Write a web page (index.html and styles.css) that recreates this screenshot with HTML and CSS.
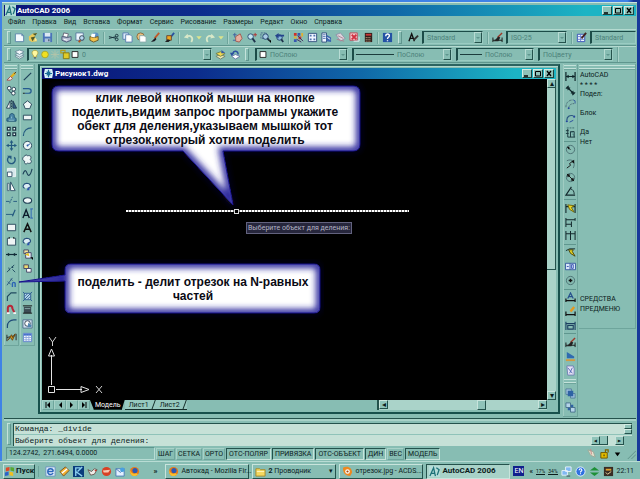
FILE: index.html
```html
<!DOCTYPE html>
<html lang="ru">
<head>
    <meta charset="UTF-8">
    <meta name="viewport" content="width=device-width, initial-scale=1.0">
    <title>AutoCAD 2006</title>
    <link rel="stylesheet" href="styles.css">
</head>
<body>
    <!-- Иконки -->
    <svg class="sprite" aria-hidden="true">
        <symbol id="new" viewBox="0 0 12 12"><path d="M1.500 2h7l2 2v6.500h-9z" fill="#f4faff" stroke="#5b86a8"/><path d="M8.500 2v2h2" fill="none" stroke="#5b86a8"/></symbol>
        <symbol id="open" viewBox="0 0 12 12"><path d="M1 5l4-3 5-1-3 4 3 5-6 1-3-2z" fill="#e8c95a"/><path d="M5 2l5-1-2 3zM3 6l5-1-3 5z" fill="#4d5a2c"/><path d="M8 6l2 3-3 1z" fill="#f6e9a0"/></symbol>
        <symbol id="save" viewBox="0 0 12 12"><path d="M1 1h10v10h-10z" fill="#4a74b8"/><path d="M3 1h6v4h-6z" fill="#dce8f4"/><path d="M3 7h6v4h-6z" fill="#a9bfd8"/><path d="M7 8h1v2h-1z" fill="#223344"/></symbol>
        <symbol id="print" viewBox="0 0 12 12"><path d="M3 1l5 1-1 4-5-1z" fill="#fff" stroke="#667"/><path d="M1 5l6 1 4-1v4l-5 2-5-2z" fill="#b6bfd2" stroke="#4a5878"/><path d="M3 8l4 1" stroke="#fff"/></symbol>
        <symbol id="preview" viewBox="0 0 12 12"><path d="M1 1h8v8h-8z" fill="#eef6ff" stroke="#58789c"/><circle cx="7.500" cy="6.500" r="2.500" fill="#b8d8f0" stroke="#345"/><path d="M6 9l-2 2" stroke="#a52" stroke-width="2"/></symbol>
        <symbol id="publish" viewBox="0 0 12 12"><circle cx="7" cy="4" r="3.500" fill="#5a90c4"/><path d="M1 5l5 1 4-1v4l-5 2-4-2z" fill="#f2c14a" stroke="#6b5a28"/><path d="M3 2l4 0-1 4-4-1z" fill="#fff"/></symbol>
        <symbol id="cut" viewBox="0 0 12 12"><path d="M1 5l8 2M1 7l8-2" stroke="#17323c" stroke-width="1"/><circle cx="9.500" cy="4" r="1.500" fill="none" stroke="#17323c"/><circle cx="9.500" cy="8" r="1.500" fill="none" stroke="#17323c"/></symbol>
        <symbol id="copy" viewBox="0 0 12 12"><path d="M1 1h6v7h-6z" fill="#d8e8f8" stroke="#5a7fb0"/><path d="M4 3h5l2 2v6h-7z" fill="#fff" stroke="#5a7fb0"/></symbol>
        <symbol id="paste" viewBox="0 0 12 12"><circle cx="5" cy="5" r="4" fill="#e8c080" stroke="#8a6a3c"/><path d="M4 4h5l2 2v5h-7z" fill="#fff" stroke="#8aa"/></symbol>
        <symbol id="brush" viewBox="0 0 12 12"><path d="M10 1l-5 6" stroke="#c05a2a" stroke-width="2"/><path d="M6 6l-5 5 4-1 2-2z" fill="#1c1c24"/></symbol>
        <symbol id="match" viewBox="0 0 12 12"><path d="M11 1l-4 5" stroke="#2850a0" stroke-width="2"/><path d="M3 4h5v5h-5z" fill="#f0a820" stroke="#643"/><path d="M4 8l-3 3h4l2-2z" fill="#222"/></symbol>
        <symbol id="undo" viewBox="0 0 12 12"><path d="M9 11c3-5-1-8-5-6" fill="none" stroke="#d8e8c8" stroke-width="2"/><path d="M1 6l4-4 1 5z" fill="#d8e8c8"/></symbol>
        <symbol id="redo" viewBox="0 0 12 12"><path d="M3 11c-3-5 1-8 5-6" fill="none" stroke="#d8e8c8" stroke-width="2"/><path d="M11 6l-4-4-1 5z" fill="#d8e8c8"/></symbol>
        <symbol id="down" viewBox="0 0 12 12"><path d="M2 4h8l-4 5z" fill="#dce48c"/></symbol>
        <symbol id="pan" viewBox="0 0 12 12"><path d="M4 5l5-3 2 5-3 4-4-1z" fill="#e8b0a0" stroke="#a05a50"/><path d="M3 1v5M1 3h4M1 9h3" stroke="#4060a0"/></symbol>
        <symbol id="zoom" viewBox="0 0 12 12"><circle cx="5" cy="5" r="3" fill="#c0e4f0" stroke="#2c4c74"/><path d="M7 7l3 4" stroke="#20344c" stroke-width="2"/><path d="M8 3h4M10 1v4" stroke="#b03030"/></symbol>
        <symbol id="zoomwin" viewBox="0 0 12 12"><path d="M1 1h6v6h-6z" fill="none" stroke="#4a6a90" stroke-dasharray="2 1"/><circle cx="6" cy="5" r="3" fill="#a8cce4" stroke="#20406c"/><path d="M8 7l2 2" stroke="#20344c" stroke-width="2"/><path d="M9 9h3v3z" fill="#000"/></symbol>
        <symbol id="zoomprev" viewBox="0 0 12 12"><circle cx="6" cy="6" r="3" fill="#88b8dc" stroke="#20406c"/><path d="M8 8l2 3" stroke="#20344c" stroke-width="2"/><path d="M1 4l4-3v2h6v2h-6v2z" fill="#24448c"/></symbol>
        <symbol id="props" viewBox="0 0 12 12"><path d="M1 1h3v3h-3zM6 5h3v3h-3z" fill="#d03028"/><path d="M5 1h3v3h-3zM1 8h3v3h-3z" fill="#3858b0"/><path d="M9 1h2v4h-2zM1 5h3v2h-3z" fill="#e0b030"/><path d="M5 4l6 6M4 8l5 3" stroke="#40285c"/></symbol>
        <symbol id="design" viewBox="0 0 12 12"><path d="M1.500 1.500h9v9h-9z" fill="#eef4ff" stroke="#31507e"/><path d="M3 3h2v2h-2zM7 3h2v2h-2zM3 7h2v2h-2zM7 7h2v2h-2z" fill="#5074b0"/></symbol>
        <symbol id="palette" viewBox="0 0 12 12"><path d="M1 1h5v10h-5z" fill="#eef4ff" stroke="#31507e"/><path d="M2 3h3M2 5h3M2 7h3" stroke="#5074b0"/><path d="M6 3l5 3v5l-5-1z" fill="#3c66b0"/><path d="M7 6l3 2" stroke="#fff"/></symbol>
        <symbol id="sheet" viewBox="0 0 12 12"><path d="M1 3l5-2 5 6-5 3z" fill="#dcd4dc" stroke="#8f94a8"/><path d="M2 8l8 2M3 4l6 3" stroke="#b08090"/></symbol>
        <symbol id="markup" viewBox="0 0 12 12"><path d="M1 1h8v8h-8z" fill="#f2c8cc" stroke="#c04858"/><path d="M3 3l5 5M8 3l-5 5" stroke="#d03040" stroke-width="2"/><path d="M5 10h6v-5" fill="none" stroke="#e8eef4"/></symbol>
        <symbol id="calc" viewBox="0 0 12 12"><path d="M2 1h8v10h-8z" fill="#33201c"/><path d="M3 2h6v2h-6z" fill="#c83838"/><path d="M3 6h6M3 8h6M3 10h6" stroke="#d8b890" stroke-dasharray="1 1"/></symbol>
        <symbol id="help" viewBox="0 0 12 12"><path d="M1 1h10v10h-10z" fill="#2452a4"/><path d="M4 4.500c0-3 4-3 4-.5 0 2-2 1.500-2 3.500M6 9v1" fill="none" stroke="#fff" stroke-width="1.500"/></symbol>
        <symbol id="tstyle" viewBox="0 0 12 12"><path d="M1 10l3-8 3 8M2 7h4" fill="none" stroke="#111" stroke-width="1.500"/><path d="M11 4l-5 5" stroke="#333" stroke-width="2"/></symbol>
        <symbol id="dstyle" viewBox="0 0 12 12"><path d="M1 6v5M11 6v5M1 9h10" stroke="#111"/><path d="M11 1l-5 5" stroke="#a03828" stroke-width="1.500"/><path d="M7 5l-5 5h5l2-4z" fill="#222"/></symbol>
        <symbol id="tbstyle" viewBox="0 0 12 12"><path d="M1.500 2.500h8v8h-8z" fill="#f0f6ff" stroke="#3450b8"/><path d="M2 5h7M2 8h7M5 3v7" stroke="#6880d0"/><path d="M11 1l-5 6" stroke="#422" stroke-width="2"/></symbol>
        <symbol id="layers" viewBox="0 0 12 12"><path d="M1 8l5-2 5 2-5 3z" fill="#e8f0ec" stroke="#6f8f9c"/><path d="M1 6l5-2 5 2-5 3z" fill="#d8e6ee" stroke="#6f8f9c"/><path d="M1 3l5-2 5 2-5 3z" fill="#f4f8fc" stroke="#6f8f9c"/></symbol>
        <symbol id="bulb" viewBox="0 0 12 12"><path d="M4 7c-3-3-1-6 2-6s5 3 2 6v2h-4z" fill="#fff8a0" stroke="#a8a040"/><path d="M5 9h2v2h-2z" fill="#567"/></symbol>
        <symbol id="sun" viewBox="0 0 12 12"><circle cx="6" cy="6" r="4" fill="#f0e020" stroke="#a8a420"/></symbol>
        <symbol id="freeze" viewBox="0 0 12 12"><path d="M2 2l8 8M10 2l-8 8M6 1v10M1 6h10" stroke="#b4c4a8"/></symbol>
        <symbol id="lock" viewBox="0 0 12 12"><path d="M1 1h5v3h-5z" fill="none" stroke="#b4a020" stroke-width="1.500"/><path d="M4 4h7v7h-7z" fill="#e0cc28" stroke="#7c7010"/></symbol>
        <symbol id="swatch" viewBox="0 0 12 12"><path d="M2.500 2.500h7v7h-7z" fill="#fff" stroke="#111"/></symbol>
        <symbol id="laycur" viewBox="0 0 12 12"><path d="M1 8l5-2 5 2-5 3z" fill="#ece8b0" stroke="#708070"/><path d="M1 5l5-2 5 2-5 3z" fill="#f2d850" stroke="#70804c"/><path d="M7 1l4 3-4 1z" fill="#3858a0"/></symbol>
        <symbol id="layprev" viewBox="0 0 12 12"><path d="M3 8l4-2 5 2-5 3z" fill="#fff" stroke="#6878a8"/><path d="M10 6c0-4-5-5-6-1" fill="none" stroke="#2c50a0" stroke-width="1.500"/><path d="M1 4l5 0-3 4z" fill="#2c50a0"/></symbol>

        <symbol id="erase" viewBox="0 0 12 12"><path d="M10 2l-5 5" stroke="#e0b020" stroke-width="2.500"/><path d="M11 1l-2 2" stroke="#333"/><path d="M5 6l-4 4h4l2-2z" fill="#f4f0e8" stroke="#a04848"/></symbol>
        <symbol id="copyobj" viewBox="0 0 12 12"><circle cx="3.500" cy="3.500" r="2" fill="#fff" stroke="#223c50"/><circle cx="8.500" cy="4.500" r="2" fill="#fff" stroke="#223c50"/><circle cx="8" cy="9" r="2" fill="#fff" stroke="#223c50"/><path d="M3 6l3 3" stroke="#223c50"/></symbol>
        <symbol id="mirror" viewBox="0 0 12 12"><path d="M4.500 2v8h-4z" fill="#fff" stroke="#223c50"/><path d="M7.500 2v8h4z" fill="#345f88" stroke="#223c50"/><path d="M6 1v10" stroke="#223c50" stroke-dasharray="2 1"/></symbol>
        <symbol id="offset" viewBox="0 0 12 12"><path d="M1 10v-3l3-1v-2c0-3 5-3 5 0v2l2 1v3z" fill="#4a86a8" stroke="#1d5070"/><path d="M3 9h6M6 5v2" stroke="#8cc0cc"/></symbol>
        <symbol id="array" viewBox="0 0 12 12"><path d="M1.500 1.500h3v3h-3zM7.500 1.500h3v3h-3zM1.500 7.500h3v3h-3zM7.500 7.500h3v3h-3z" fill="#e8f4f4" stroke="#1c3444" stroke-width="1.300"/></symbol>
        <symbol id="move" viewBox="0 0 12 12"><path d="M6 2v8M2 6h8" stroke="#245a80" stroke-width="1.300"/><path d="M6 0l2 3h-4zM6 12l2-3h-4zM0 6l3-2v4zM12 6l-3-2v4z" fill="#245a80"/></symbol>
        <symbol id="rotate" viewBox="0 0 12 12"><path d="M4 2.500a4.200 4.200 0 1 0 5 1" fill="none" stroke="#245a80" stroke-width="1.500"/><path d="M1 2h5v4z" fill="#245a80"/></symbol>
        <symbol id="scale" viewBox="0 0 12 12"><path d="M1.500 1.500h9v9h-9z" fill="#d8e8ec" stroke="#eef6f4"/><path d="M1.500 5.500h5v5h-5z" fill="#fff" stroke="#315268"/></symbol>
        <symbol id="stretch" viewBox="0 0 12 12"><path d="M1.500 2.500h2v8h-2z" fill="#e8f0f4" stroke="#46687c"/><path d="M5 1l5 9.500h-5z" fill="#fff" stroke="#315268"/></symbol>
        <symbol id="trim" viewBox="0 0 12 12"><path d="M0 7h4M8 7h4" stroke="#245a80"/><path d="M4 9l3-7" stroke="#245a80" stroke-dasharray="2 1"/></symbol>
        <symbol id="extend" viewBox="0 0 12 12"><path d="M0 7h8" stroke="#245a80"/><path d="M7 9l3-7" stroke="#245a80" stroke-width="1.300"/></symbol>
        <symbol id="breakpt" viewBox="0 0 12 12"><path d="M1.500 2.500h9v7h-9z" fill="#eef4f4" stroke="#26465a"/></symbol>
        <symbol id="break" viewBox="0 0 12 12"><path d="M3 2.500h-1.500v7.500h9v-7.500h-1.500" fill="#eef4f4" stroke="#26465a"/><path d="M3 2h1M8 2h1" stroke="#000" stroke-width="2"/></symbol>
        <symbol id="join" viewBox="0 0 12 12"><path d="M0 6h12" stroke="#132c38" stroke-width="1.300"/><path d="M5 6l-3-2v4zM7 6l3-2v4z" fill="#132c38"/></symbol>
        <symbol id="lengthen" viewBox="0 0 12 12"><path d="M1 10l4-4M6 5l3-3M7 7l3 3M3 5l1 3" stroke="#204a60"/><circle cx="7" cy="4.500" r="1" fill="#204a60"/></symbol>
        <symbol id="divide" viewBox="0 0 12 12"><path d="M1 9l6-8M2 5l3 3M5 2l2 2" stroke="#2b5680"/><path d="M7 11v-4c0-1.500 3-1.500 3 0v4" fill="none" stroke="#2c64b4" stroke-width="1.500"/></symbol>
        <symbol id="chamfer" viewBox="0 0 12 12"><path d="M1.500 11v-5l4-4h6" fill="none" stroke="#204a60" stroke-width="1.200"/><path d="M1 2h3" stroke="#7aa"/></symbol>
        <symbol id="magnet" viewBox="0 0 12 12"><path d="M2 10l0-5c0-4 5-4 5 0l2 4" fill="none" stroke="#b82838" stroke-width="2.200"/><path d="M1 10h3M8 10h3" stroke="#f4f4f4" stroke-width="2"/></symbol>
        <symbol id="fillet" viewBox="0 0 12 12"><path d="M1.500 11v-2c0-4 3-7 7-7h3" fill="none" stroke="#1f4a78" stroke-width="1.300"/></symbol>
        <symbol id="explode" viewBox="0 0 12 12"><path d="M1 3v7M11 2v7M1 6l9-2" stroke="#222"/><path d="M2 9l4-6 1 3 3-4-3 7-2-3z" fill="#e0a820" stroke="#6a4410"/></symbol>

        <symbol id="line" viewBox="0 0 12 12"><path d="M2 10l8-8" stroke="#1d4058" stroke-width="1.300"/></symbol>
        <symbol id="pline" viewBox="0 0 12 12"><path d="M1 4h6c4 0 4 5 0 5h-4" fill="none" stroke="#245a90" stroke-width="1.300"/><path d="M1 9h2" stroke="#111"/></symbol>
        <symbol id="polygon" viewBox="0 0 12 12"><path d="M6 2l4.500 3.500-2 5h-5l-2-5z" fill="#eef6f6" stroke="#26465a"/></symbol>
        <symbol id="rect" viewBox="0 0 12 12"><path d="M1.500 3.500h9v5h-9z" fill="#eef6f6" stroke="#26465a"/></symbol>
        <symbol id="arc" viewBox="0 0 12 12"><path d="M1.500 11c0-6 4-9 9-9" fill="none" stroke="#245a80" stroke-width="1.300"/></symbol>
        <symbol id="circle" viewBox="0 0 12 12"><circle cx="6" cy="6" r="4.500" fill="#eef6f6" stroke="#26465a"/><path d="M6 6l3-2" stroke="#2458a8"/><circle cx="6" cy="6" r="1" fill="#2458a8"/></symbol>
        <symbol id="cloud" viewBox="0 0 12 12"><path d="M3 2c2-2 3 0 3 0 3-1 5 1 3 4 3 3 0 5-3 4-2 2-4 0-3-2-3-1-3-4 0-6z" fill="#eef6f6" stroke="#26465a"/></symbol>
        <symbol id="spline" viewBox="0 0 12 12"><path d="M1 8c3-8 4-2 5 0s3 2 5-6" fill="none" stroke="#1d4058" stroke-width="1.200"/></symbol>
        <symbol id="elarc" viewBox="0 0 12 12"><path d="M3 8c-3-1-2-5 2-5.500 5 0 6 5 1 5.500" fill="#dcecf4" stroke="#26507c" stroke-width="1.200"/><path d="M8 6v4h-3z" fill="#2c50b0"/></symbol>
        <symbol id="ellipse" viewBox="0 0 12 12"><ellipse cx="6" cy="6" rx="4.500" ry="3" fill="#eef6f6" stroke="#26465a" stroke-width="1.300"/></symbol>
        <symbol id="mtext" viewBox="0 0 12 12"><path d="M1 11l3.500-9 3.500 9M2 8h5" fill="none" stroke="#0c1c2c" stroke-width="1.500"/><path d="M10 1v10M9 1h3M9 11h3" stroke="#2c64b4"/></symbol>
        <symbol id="text" viewBox="0 0 12 12"><path d="M2 11l4-9 4 9M3.500 8h5" fill="none" stroke="#111" stroke-width="1.600"/></symbol>
        <symbol id="insert" viewBox="0 0 12 12"><path d="M2 1h5v4h-5z" fill="#f0e4a0" stroke="#446"/><path d="M4 4h6v6h-6z" fill="#eef4fc" stroke="#446"/><path d="M3 6l4-2 1 4z" fill="#e8c020"/><path d="M9 9h3v3z" fill="#000"/></symbol>
        <symbol id="block" viewBox="0 0 12 12"><path d="M2 2h5v4h-5z" fill="#f0dc70" stroke="#446"/><path d="M5 6h5v4h-5z" fill="#fff" stroke="#446"/></symbol>
        <symbol id="hatch" viewBox="0 0 12 12"><path d="M2.500 2.500h7v7h-7z" fill="#b8d8ec" stroke="#2c5c90"/><path d="M3 9l6-6M3 6l3-3M6 9l3-3M1 1l2 2M9 9l2 2M11 1l-2 2M3 9l-2 2" stroke="#2c5c90"/></symbol>
        <symbol id="gradient" viewBox="0 0 12 12"><path d="M2 3h8v7h-8z" fill="#3c4c54"/><path d="M1 2h10M1 10h10" stroke="#111"/><path d="M3 5h6" stroke="#8aa"/></symbol>
        <symbol id="region" viewBox="0 0 12 12"><path d="M1 2h10v9h-10z" fill="#d0e0f0" stroke="#50708c"/><circle cx="6" cy="6" r="3" fill="#fff" stroke="#345"/><path d="M7 5l3 3v2h-4z" fill="#4f84b0"/></symbol>
        <symbol id="table" viewBox="0 0 12 12"><path d="M1.500 1.500h9v9h-9z" fill="#f4f8ff" stroke="#5c80cc"/><path d="M2 3h8" stroke="#4470cc" stroke-width="2"/><path d="M2 6h8M2 8.500h8M4.500 3v7M7.500 3v7" stroke="#90a8dc"/></symbol>

        <symbol id="dlin" viewBox="0 0 12 12"><path d="M1 1v10M11 1v10M1 6h10" stroke="#0e2428" stroke-width="1.300"/><path d="M1 6l3-2v4zM11 6l-3-2v4z" fill="#0e2428"/></symbol>
        <symbol id="dali" viewBox="0 0 12 12"><path d="M1 4l3-3M8 11l3-3M3 3l6 6" stroke="#0e2428" stroke-width="1.300"/><path d="M2 2l4 1-3 3zM10 10l-4-1 3-3z" fill="#0e2428"/></symbol>
        <symbol id="darc" viewBox="0 0 12 12"><path d="M1 9c0-5 3-8 8-8M4 11c0-4 2-6 6-6" fill="none" stroke="#4a6c74" stroke-dasharray="3 1"/><path d="M9 1l2 1v3" fill="none" stroke="#3358a0"/><circle cx="4" cy="10" r="1" fill="#2848a0"/></symbol>
        <symbol id="dord" viewBox="0 0 12 12"><path d="M2 8c0-4 3-6 7-5" fill="none" stroke="#2c5880" stroke-width="1.300"/><circle cx="2" cy="9" r="1.200" fill="#26489c"/><circle cx="10" cy="4" r="1.200" fill="#26489c"/><path d="M5 10l4-2" stroke="#26489c"/></symbol>
        <symbol id="djog" viewBox="0 0 12 12"><path d="M3 2v9h8M6 11v-6h4v6M1 4h3M1 7h3" fill="none" stroke="#16333a"/><path d="M7 5l3 5M2 1h8" stroke="#3a6a70" stroke-dasharray="2 1"/></symbol>
        <symbol id="drad" viewBox="0 0 12 12"><circle cx="6" cy="6" r="4.500" fill="none" stroke="#496e72"/><path d="M6 6l-3-2" stroke="#111"/><path d="M2 3l3 0-1 3z" fill="#111"/></symbol>
        <symbol id="djrad" viewBox="0 0 12 12"><path d="M2 3c6-3 10 2 7 8" fill="none" stroke="#496e72"/><path d="M2 11l4-3-1-2 4-3" fill="none" stroke="#111"/><path d="M10 2v4l-3-2z" fill="#111"/></symbol>
        <symbol id="ddia" viewBox="0 0 12 12"><circle cx="6" cy="6" r="4.500" fill="none" stroke="#496e72"/><path d="M3 3l6 6" stroke="#111"/><path d="M2 2l4 1-3 3zM10 10l-4-1 3-3z" fill="#111"/></symbol>
        <symbol id="dang" viewBox="0 0 12 12"><path d="M7 1l-6 9h10" fill="none" stroke="#13282c" stroke-width="1.200"/><path d="M6 3c3 1 4 3 4 6" fill="none" stroke="#13282c"/></symbol>
        <symbol id="dquick" viewBox="0 0 12 12"><path d="M1 1v10M11 1v10M1 4h10" stroke="#13282c" stroke-width="1.200"/><path d="M3 2l7 1-3 2 3 5-5-3z" fill="#e8d420" stroke="#6a6410"/></symbol>
        <symbol id="dbase" viewBox="0 0 12 12"><path d="M1 1v10M11 1v3M7 5v6M1 3h10M1 8h6" stroke="#13282c" stroke-width="1.100"/></symbol>
        <symbol id="dcont" viewBox="0 0 12 12"><path d="M1 1v10M6 1v10M11 1v10M1 4h10" stroke="#13282c" stroke-width="1.100"/></symbol>
        <symbol id="dlead" viewBox="0 0 12 12"><path d="M1 4l4-2h6" fill="none" stroke="#13282c"/><path d="M4 3l5 0-1 2 3 5-5-3z" fill="#e8d420" stroke="#45420c"/></symbol>
        <symbol id="dtol" viewBox="0 0 12 12"><path d="M.5 2.500h11v7h-11zM5.500 2.500v7" fill="#d8e6fa" stroke="#34569c"/><path d="M2 6h2M7 4v4h2v-4z" fill="none" stroke="#3450b0"/></symbol>
        <symbol id="dcen" viewBox="0 0 12 12"><circle cx="6" cy="6" r="4.500" fill="none" stroke="#496e72"/><path d="M6 4v4M4 6h4" stroke="#111" stroke-width="1.500"/></symbol>
        <symbol id="dedit" viewBox="0 0 12 12"><path d="M3 7l3-6 3 6M4 5h4" fill="none" stroke="#26508c" stroke-width="1.300"/><path d="M1 7v4M11 7v4M1 9.500h10" stroke="#111" stroke-width="1.300"/></symbol>
        <symbol id="dtedit" viewBox="0 0 12 12"><path d="M10 1l-4 5" stroke="#e49820" stroke-width="2.500"/><path d="M1 6v5M11 6v5M1 9.500h10" stroke="#111" stroke-width="1.300"/></symbol>
        <symbol id="dupd" viewBox="0 0 12 12"><path d="M1 2v9M11 2v9M1 4h10M3 6h6v4h-6z" fill="none" stroke="#1c3f60" stroke-width="1.200"/></symbol>
        <symbol id="dcolor" viewBox="0 0 12 12"><path d="M2 8v-7l8 5v2z" fill="#2f6ab0"/><path d="M1 9h10v2h-10z" fill="#d09a40"/></symbol>
        <symbol id="dxref" viewBox="0 0 12 12"><path d="M2 1h7l1 3v7h-7z" fill="#e4e0f4" stroke="#7080b4"/><path d="M3 3l5 6M8 3l-3 6" stroke="#5068b4"/></symbol>
        <symbol id="front" viewBox="0 0 12 12"><path d="M1 1h6v6h-6zM6 6h5v5h-5z" fill="#9cc0dc" stroke="#56809c"/><path d="M3 3h6v6h-6z" fill="#2e62a4"/></symbol>
        <symbol id="back" viewBox="0 0 12 12"><path d="M3 3h6v6h-6z" fill="#2e62a4"/><path d="M1 1h5v5h-5zM6 6h5v5h-5z" fill="#b4d4e8" stroke="#46708c"/></symbol>

        <symbol id="acad" viewBox="0 0 12 12"><path d="M0 0h12v12h-12z" fill="#b4dcd8"/><path d="M1 11l4-9 2 9M3 8h4M8 2l3 2-2 6" fill="none" stroke="#1c7078" stroke-width="1.400"/></symbol>
        <symbol id="dwg" viewBox="0 0 12 12"><path d="M2 1h8l1 5-1 5h-8l-1-5z" fill="#d8f0f8"/><path d="M6 2v8M2 6h8M4 4l4 4M8 4l-4 4" stroke="#1a6c98" stroke-width="1.300"/></symbol>
        <symbol id="flag" viewBox="0 0 12 12"><path d="M2 2l4-1v4l-4 1z" fill="#e04828"/><path d="M7 1l4 1v4l-4-1z" fill="#58a830"/><path d="M1 7l4-1v4l-4 1z" fill="#2c62c8"/><path d="M6 6l4 1v4l-4-1z" fill="#f0c020"/></symbol>
        <symbol id="ie" viewBox="0 0 12 12"><path d="M1 1h10v10h-10z" fill="#e8f2fc" stroke="#6890c0"/><path d="M9 6h-6M9 6c0-4-6-4-6 0s4 4 6 2" fill="none" stroke="#2a66bc" stroke-width="1.500"/></symbol>
        <symbol id="pencil" viewBox="0 0 12 12"><path d="M1 6l6-5 4 4-6 6z" fill="#f0b030" stroke="#7c5020"/><path d="M3 8l6-5" stroke="#fff" stroke-width="1.500"/></symbol>
        <symbol id="blueapp" viewBox="0 0 12 12"><path d="M0 0h12v12h-12z" fill="#0a3c7c"/><path d="M3 11v-9h5M3 6l7 5M10 1l-5 5" fill="none" stroke="#8cd0f0" stroke-width="1.500"/></symbol>
        <symbol id="bird" viewBox="0 0 12 12"><path d="M1 4l4 2 3-3 3 1-3 5-4 1z" fill="#f0ece8" stroke="#685850"/><path d="M8 4l3 1-2 1z" fill="#c03020"/></symbol>
        <symbol id="redapp" viewBox="0 0 12 12"><circle cx="6" cy="6" r="5" fill="#d84024"/><path d="M2 5l8-1-2 3h-5z" fill="#f8c8b0"/></symbol>
        <symbol id="mail" viewBox="0 0 12 12"><path d="M1 3h9v8h-9z" fill="#e4f0ff" stroke="#4878b4"/><path d="M1 3l5 4 4-4" fill="none" stroke="#4878b4"/><circle cx="8" cy="4" r="2.500" fill="#48a0e0"/></symbol>
        <symbol id="firefox" viewBox="0 0 12 12"><circle cx="6" cy="6" r="5" fill="#e87818"/><circle cx="6.500" cy="5" r="2.800" fill="#2c58b4"/><path d="M1 4c1 4 4 5 7 4l2 1c-4 4-9 2-9-5z" fill="#f8c030"/></symbol>
        <symbol id="folder" viewBox="0 0 12 12"><path d="M1 3h4l1 1h5v7h-10z" fill="#f4d860" stroke="#a88a28"/><path d="M2 6h8" stroke="#fff6c0"/></symbol>
        <symbol id="acdsee" viewBox="0 0 12 12"><path d="M1 2c5-3 10 0 10 5l-2 4c-5 0-8-3-8-9z" fill="#ee8820"/><circle cx="6" cy="6" r="2.500" fill="#fff"/><circle cx="6" cy="6" r="1.200" fill="#a04c10"/></symbol>
        <symbol id="net" viewBox="0 0 12 12"><path d="M5 1h6v5h-6zM1 5h6v5h-6z" fill="#80b8f4" stroke="#e8f4fc"/><path d="M6 11h4" stroke="#345"/></symbol>
        <symbol id="query" viewBox="0 0 12 12"><circle cx="6" cy="6" r="5" fill="#2e70e0" stroke="#e8f4ff"/><path d="M4.500 4.500c0-2 3-2 3 0 0 1-1.500 1-1.500 2.500M6 8v1" fill="none" stroke="#fff" stroke-width="1.200"/></symbol>
        <symbol id="updown" viewBox="0 0 12 12"><path d="M6 1l5 4h-10zM6 11l5-4h-10z" fill="#1e9038"/></symbol>
        <symbol id="meter" viewBox="0 0 12 12"><path d="M1 1h10v10h-10z" fill="#382c24"/><path d="M3 3h6v2h-6z" fill="#e4a030"/><path d="M3 7l2 2 4-3" fill="none" stroke="#f0d8a0"/></symbol>
        <symbol id="tip" viewBox="0 0 12 12"><path d="M2 2l6 2 2 6-5-2z" fill="#e4e0cc" stroke="#9aa898"/><path d="M5 1l1 6" stroke="#c88"/></symbol>
        <symbol id="goldlock" viewBox="0 0 12 12"><path d="M7 5v-3h3v3" fill="none" stroke="#7c6400" stroke-width="1.300"/><path d="M2 5h7v6h-7z" fill="#e4bc00" stroke="#6a5400"/><path d="M5 7h1v2h-1z" fill="#222211"/></symbol>
    </svg>

    <div class="app">
        <header class="titlebar">
            <svg class="ico"><use href="#acad"/></svg>
            <h1>AutoCAD 2006</h1>
            <button class="winbtn" aria-label="Свернуть"><svg viewBox="0 0 8 7"><path d="M1 6h4" stroke="#000" stroke-width="1.500"/></svg></button>
            <button class="winbtn" aria-label="Восстановить"><svg viewBox="0 0 8 7"><path d="M1.500 1.500h5v4.500h-5z" fill="none" stroke="#000"/></svg></button>
            <button class="winbtn" aria-label="Закрыть"><svg viewBox="0 0 8 7"><path d="M2 1l4 5M6 1l-4 5" stroke="#000" stroke-width="1.300"/></svg></button>
        </header>

        <nav class="menu">
            <a href="#">Файл</a>
            <a href="#">Правка</a>
            <a href="#">Вид</a>
            <a href="#">Вставка</a>
            <a href="#">Формат</a>
            <a href="#">Сервис</a>
            <a href="#">Рисование</a>
            <a href="#">Размеры</a>
            <a href="#">Редакт</a>
            <a href="#">Окно</a>
            <a href="#">Справка</a>
        </nav>

        <div class="toolbar">
            <i class="grip"></i>
            <button class="tool" aria-label="Новый"><svg class="ico"><use href="#new"/></svg></button>
            <button class="tool" aria-label="Открыть"><svg class="ico"><use href="#open"/></svg></button>
            <button class="tool" aria-label="Сохранить"><svg class="ico"><use href="#save"/></svg></button>
            <i class="sep"></i>
            <button class="tool" aria-label="Печать"><svg class="ico"><use href="#print"/></svg></button>
            <button class="tool" aria-label="Просмотр"><svg class="ico"><use href="#preview"/></svg></button>
            <button class="tool" aria-label="Публикация"><svg class="ico"><use href="#publish"/></svg></button>
            <i class="sep"></i>
            <button class="tool" aria-label="Вырезать"><svg class="ico"><use href="#cut"/></svg></button>
            <button class="tool" aria-label="Копировать"><svg class="ico"><use href="#copy"/></svg></button>
            <button class="tool" aria-label="Вставить"><svg class="ico"><use href="#paste"/></svg></button>
            <button class="tool" aria-label="Копирование свойств"><svg class="ico"><use href="#brush"/></svg></button>
            <button class="tool" aria-label="Редактор блоков"><svg class="ico"><use href="#match"/></svg></button>
            <i class="sep"></i>
            <button class="tool" aria-label="Отменить"><svg class="ico"><use href="#undo"/></svg></button>
            <button class="tool narrow" aria-label="Список отмены"><svg class="ico"><use href="#down"/></svg></button>
            <button class="tool" aria-label="Повторить"><svg class="ico"><use href="#redo"/></svg></button>
            <button class="tool narrow" aria-label="Список повтора"><svg class="ico"><use href="#down"/></svg></button>
            <i class="sep"></i>
            <button class="tool" aria-label="Панорамирование"><svg class="ico"><use href="#pan"/></svg></button>
            <button class="tool" aria-label="Зумирование"><svg class="ico"><use href="#zoom"/></svg></button>
            <button class="tool" aria-label="Рамка"><svg class="ico"><use href="#zoomwin"/></svg></button>
            <button class="tool" aria-label="Предыдущий вид"><svg class="ico"><use href="#zoomprev"/></svg></button>
            <i class="sep"></i>
            <button class="tool" aria-label="Свойства"><svg class="ico"><use href="#props"/></svg></button>
            <button class="tool" aria-label="Центр управления"><svg class="ico"><use href="#design"/></svg></button>
            <button class="tool" aria-label="Палитры"><svg class="ico"><use href="#palette"/></svg></button>
            <button class="tool" aria-label="Подшивки"><svg class="ico"><use href="#sheet"/></svg></button>
            <button class="tool" aria-label="Пометки"><svg class="ico"><use href="#markup"/></svg></button>
            <button class="tool" aria-label="Калькулятор"><svg class="ico"><use href="#calc"/></svg></button>
            <i class="sep"></i>
            <button class="tool" aria-label="Помощь"><svg class="ico"><use href="#help"/></svg></button>
            <i class="grip wide"></i>
            <button class="tool" aria-label="Текстовые стили"><svg class="ico"><use href="#tstyle"/></svg></button>
            <div class="combo style"><select aria-label="Текстовый стиль"><option>Standard</option></select><b></b></div>
            <i class="sep"></i>
            <button class="tool" aria-label="Размерные стили"><svg class="ico"><use href="#dstyle"/></svg></button>
            <div class="combo style"><select aria-label="Размерный стиль"><option>ISO-25</option></select><b></b></div>
            <i class="sep"></i>
            <button class="tool" aria-label="Стили таблиц"><svg class="ico"><use href="#tbstyle"/></svg></button>
            <div class="combo last"><select aria-label="Стиль таблиц"><option>Standard</option></select></div>
        </div>

        <div class="toolbar">
            <i class="grip"></i>
            <button class="tool" aria-label="Слои"><svg class="ico"><use href="#layers"/></svg></button>
            <div class="combo layer">
                <svg class="ico"><use href="#bulb"/></svg>
                <svg class="ico"><use href="#sun"/></svg>
                <svg class="ico"><use href="#freeze"/></svg>
                <svg class="ico"><use href="#lock"/></svg>
                <svg class="ico"><use href="#swatch"/></svg>
                <select aria-label="Слой"><option>0</option></select><b></b>
            </div>
            <button class="tool" aria-label="Сделать слой текущим"><svg class="ico"><use href="#laycur"/></svg></button>
            <button class="tool" aria-label="Предыдущий слой"><svg class="ico"><use href="#layprev"/></svg></button>
            <i class="grip wide"></i>
            <div class="combo color"><svg class="ico"><use href="#swatch"/></svg><select aria-label="Цвет"><option>ПоСлою</option></select><b></b></div>
            <div class="combo ltype"><i class="rule"></i><select aria-label="Тип линии"><option>ПоСлою</option></select><b></b></div>
            <div class="combo weight"><i class="rule"></i><select aria-label="Вес линии"><option>ПоСлою</option></select><b></b></div>
            <div class="combo plot"><select aria-label="Стиль печати"><option>ПоЦвету</option></select><b></b></div>
            <i class="sep end"></i>
        </div>

        <main class="work">
            <div class="palette">
                <i class="hgrip"></i>
                <button class="tool" aria-label="Стереть"><svg class="ico"><use href="#erase"/></svg></button>
                <button class="tool" aria-label="Копировать объект"><svg class="ico"><use href="#copyobj"/></svg></button>
                <button class="tool" aria-label="Зеркало"><svg class="ico"><use href="#mirror"/></svg></button>
                <button class="tool" aria-label="Подобие"><svg class="ico"><use href="#offset"/></svg></button>
                <button class="tool" aria-label="Массив"><svg class="ico"><use href="#array"/></svg></button>
                <button class="tool" aria-label="Перенести"><svg class="ico"><use href="#move"/></svg></button>
                <button class="tool" aria-label="Повернуть"><svg class="ico"><use href="#rotate"/></svg></button>
                <button class="tool" aria-label="Масштаб"><svg class="ico"><use href="#scale"/></svg></button>
                <button class="tool" aria-label="Растянуть"><svg class="ico"><use href="#stretch"/></svg></button>
                <button class="tool" aria-label="Обрезать"><svg class="ico"><use href="#trim"/></svg></button>
                <button class="tool" aria-label="Удлинить"><svg class="ico"><use href="#extend"/></svg></button>
                <button class="tool" aria-label="Разорвать в точке"><svg class="ico"><use href="#breakpt"/></svg></button>
                <button class="tool" aria-label="Разорвать"><svg class="ico"><use href="#break"/></svg></button>
                <button class="tool" aria-label="Соединить"><svg class="ico"><use href="#join"/></svg></button>
                <button class="tool" aria-label="Увеличить"><svg class="ico"><use href="#lengthen"/></svg></button>
                <button class="tool" aria-label="Поделить"><svg class="ico"><use href="#divide"/></svg></button>
                <button class="tool" aria-label="Фаска"><svg class="ico"><use href="#chamfer"/></svg></button>
                <button class="tool" aria-label="Привязка"><svg class="ico"><use href="#magnet"/></svg></button>
                <button class="tool" aria-label="Сопряжение"><svg class="ico"><use href="#fillet"/></svg></button>
                <button class="tool" aria-label="Расчленить"><svg class="ico"><use href="#explode"/></svg></button>
            </div>
            <div class="palette">
                <i class="hgrip"></i>
                <button class="tool" aria-label="Отрезок"><svg class="ico"><use href="#line"/></svg></button>
                <button class="tool" aria-label="Полилиния"><svg class="ico"><use href="#pline"/></svg></button>
                <button class="tool" aria-label="Многоугольник"><svg class="ico"><use href="#polygon"/></svg></button>
                <button class="tool" aria-label="Прямоугольник"><svg class="ico"><use href="#rect"/></svg></button>
                <button class="tool" aria-label="Дуга"><svg class="ico"><use href="#arc"/></svg></button>
                <button class="tool" aria-label="Круг"><svg class="ico"><use href="#circle"/></svg></button>
                <button class="tool" aria-label="Облако"><svg class="ico"><use href="#cloud"/></svg></button>
                <button class="tool" aria-label="Сплайн"><svg class="ico"><use href="#spline"/></svg></button>
                <button class="tool" aria-label="Дуга эллипса"><svg class="ico"><use href="#elarc"/></svg></button>
                <button class="tool" aria-label="Эллипс"><svg class="ico"><use href="#ellipse"/></svg></button>
                <button class="tool" aria-label="Многострочный текст"><svg class="ico"><use href="#mtext"/></svg></button>
                <button class="tool" aria-label="Текст"><svg class="ico"><use href="#text"/></svg></button>
                <button class="tool" aria-label="Эллиптическая дуга"><svg class="ico"><use href="#elarc"/></svg></button>
                <button class="tool" aria-label="Вставить блок"><svg class="ico"><use href="#insert"/></svg></button>
                <button class="tool" aria-label="Создать блок"><svg class="ico"><use href="#block"/></svg></button>
                <button class="tool" aria-label="Точка"></button>
                <button class="tool" aria-label="Штриховка"><svg class="ico"><use href="#hatch"/></svg></button>
                <button class="tool" aria-label="Градиент"><svg class="ico"><use href="#gradient"/></svg></button>
                <button class="tool" aria-label="Область"><svg class="ico"><use href="#region"/></svg></button>
                <button class="tool" aria-label="Таблица"><svg class="ico"><use href="#table"/></svg></button>
            </div>

            <section class="doc">
                <div class="titlebar">
                    <svg class="ico"><use href="#dwg"/></svg>
                    <h2>Рисунок1.dwg</h2>
                    <button class="winbtn" aria-label="Свернуть рисунок"><svg viewBox="0 0 8 7"><path d="M1 6h4" stroke="#000" stroke-width="1.500"/></svg></button>
                    <button class="winbtn" aria-label="Развернуть рисунок"><svg viewBox="0 0 8 7"><path d="M1.500 1.500h5v4.500h-5z" fill="none" stroke="#000"/></svg></button>
                    <button class="winbtn" aria-label="Закрыть рисунок"><svg viewBox="0 0 8 7"><path d="M2 1l4 5M6 1l-4 5" stroke="#000" stroke-width="1.300"/></svg></button>
                </div>
                <div class="view">
                    <div class="canvas">
                        <div class="segment"></div>
                        <div class="prompt">Выберите объект для деления:</div>

                        <svg class="ucs" viewBox="0 0 62 62">
                            <path d="M7.500 50v-30M12 54.500h26M4.500 51.500h6v6h-6z" fill="none" stroke="#e4e4e4"/>
                            <path d="M7.500 14l-3 7h6zM45 54.500l-8-3v6z" fill="none" stroke="#e4e4e4"/>
                            <path d="M5 2l3.500 5 3.500-5M8.500 7v4M52 51l6 7M58 51l-6 7" fill="none" stroke="#d0d0d0"/>
                        </svg>

                        <div class="callout ask">
                            <svg viewBox="0 0 320 130">
                                <defs>
                                    <clipPath id="askClip"><path d="M10 5h294q7 0 7 7v51q0 7-7 7h-130l10 54-50-54h-124q-7 0-7-7v-51q0-7 7-7z"/></clipPath>
                                    <filter id="soft" x="-20%" y="-20%" width="140%" height="140%"><feGaussianBlur stdDeviation="3"/></filter>
                                </defs>
                                <path class="halo" filter="url(#soft)" d="M10 5h294q7 0 7 7v51q0 7-7 7h-130l10 54-50-54h-124q-7 0-7-7v-51q0-7 7-7z"/>
                                <g clip-path="url(#askClip)">
                                    <path class="fill" d="M0 0h320v130h-320z"/>
                                    <path class="glow" filter="url(#soft)" d="M10 5h294q7 0 7 7v51q0 7-7 7h-130l10 54-50-54h-124q-7 0-7-7v-51q0-7 7-7z"/>
                                </g>
                                <path class="edge" d="M10 5h294q7 0 7 7v51q0 7-7 7h-130l10 54-50-54h-124q-7 0-7-7v-51q0-7 7-7z"/>
                            </svg>
                            <p>клик левой кнопкой мыши на кнопке<br>поделить,видим запрос программы укажите<br>обект для деления,указываем мышкой тот<br>отрезок,который хотим поделить</p>
                        </div>
                        <div class="pick"></div>

                        <div class="callout split">
                            <svg viewBox="0 0 310 62">
                                <defs>
                                    <clipPath id="splitClip"><path d="M57 5h243q6 0 6 6v37q0 6-6 6h-243q-6 0-6-6v-26l-46 1 46-7v-5q0-6 6-6z"/></clipPath>
                                </defs>
                                <path class="halo" filter="url(#soft)" d="M57 5h243q6 0 6 6v37q0 6-6 6h-243q-6 0-6-6v-37q0-6 6-6z"/>
                                <g clip-path="url(#splitClip)">
                                    <path class="fill" d="M0 0h310v62h-310z"/>
                                    <path class="glow" filter="url(#soft)" d="M57 5h243q6 0 6 6v37q0 6-6 6h-243q-6 0-6-6v-26l-46 1 46-7v-5q0-6 6-6z"/>
                                </g>
                                <path class="edge" d="M57 5h243q6 0 6 6v37q0 6-6 6h-243q-6 0-6-6v-26l-46 1 46-7v-5q0-6 6-6z"/>
                            </svg>
                            <p>поделить - делит отрезок на N-равных<br>частей</p>
                        </div>
                    </div>
                    <div class="vscroll">
                        <button class="arrow" aria-label="Вверх">▴</button>
                        <i class="vthumb"></i>
                        <button class="arrow" aria-label="Вниз">▾</button>
                    </div>
                </div>
                <div class="tabs">
                    <button class="arrow" aria-label="Первый лист"><svg viewBox="0 0 6 6"><path d="M1 0v6" stroke="#000"/><path d="M5 0v6l-3-3z"/></svg></button>
                    <button class="arrow" aria-label="Предыдущий лист"><svg viewBox="0 0 6 6"><path d="M5 0v6l-3-3z"/></svg></button>
                    <button class="arrow" aria-label="Следующий лист"><svg viewBox="0 0 6 6"><path d="M1 0v6l3-3z"/></svg></button>
                    <button class="arrow" aria-label="Последний лист"><svg viewBox="0 0 6 6"><path d="M5 0v6" stroke="#000"/><path d="M1 0v6l3-3z"/></svg></button>
                    <a class="tab active" href="#">Модель</a>
                    <a class="tab" href="#">Лист1</a>
                    <a class="tab" href="#">Лист2</a>
                    <div class="hscroll">
                        <button class="arrow" aria-label="Влево">◂</button>
                        <i class="hthumb"></i>
                        <button class="arrow" aria-label="Вправо">▸</button>
                    </div>
                    <i class="corner"></i>
                </div>
            </section>

            <div class="palette dims">
                <i class="hgrip"></i>
                <button class="tool" aria-label="Линейный"><svg class="ico"><use href="#dlin"/></svg></button>
                <button class="tool" aria-label="Параллельный"><svg class="ico"><use href="#dali"/></svg></button>
                <button class="tool" aria-label="Длина дуги"><svg class="ico"><use href="#darc"/></svg></button>
                <button class="tool" aria-label="Ординатный"><svg class="ico"><use href="#dord"/></svg></button>
                <button class="tool" aria-label="Координаты"><svg class="ico"><use href="#djog"/></svg></button>
                <i class="hsep"></i>
                <button class="tool" aria-label="Радиус"><svg class="ico"><use href="#drad"/></svg></button>
                <button class="tool" aria-label="Радиус с изломом"><svg class="ico"><use href="#djrad"/></svg></button>
                <button class="tool" aria-label="Диаметр"><svg class="ico"><use href="#ddia"/></svg></button>
                <button class="tool" aria-label="Угловой"><svg class="ico"><use href="#dang"/></svg></button>
                <i class="hsep"></i>
                <button class="tool" aria-label="Быстрый размер"><svg class="ico"><use href="#dquick"/></svg></button>
                <button class="tool" aria-label="Базовый"><svg class="ico"><use href="#dbase"/></svg></button>
                <button class="tool" aria-label="Цепь"><svg class="ico"><use href="#dcont"/></svg></button>
                <i class="hsep"></i>
                <button class="tool" aria-label="Выноска"><svg class="ico"><use href="#dlead"/></svg></button>
                <button class="tool" aria-label="Допуск"><svg class="ico"><use href="#dtol"/></svg></button>
                <button class="tool" aria-label="Маркер центра"><svg class="ico"><use href="#dcen"/></svg></button>
                <i class="hsep"></i>
                <button class="tool" aria-label="Редактировать размер"><svg class="ico"><use href="#dedit"/></svg></button>
                <button class="tool" aria-label="Редактировать текст"><svg class="ico"><use href="#dtedit"/></svg></button>
                <button class="tool" aria-label="Обновить размер"><svg class="ico"><use href="#dupd"/></svg></button>
                <i class="hsep"></i>
                <button class="tool" aria-label="Стиль размера"><svg class="ico"><use href="#dstyle"/></svg></button>
                <button class="tool" aria-label="Измерить"><svg class="ico"><use href="#dcolor"/></svg></button>
                <button class="tool" aria-label="Ссылка"><svg class="ico"><use href="#dxref"/></svg></button>
                <i class="hgrip mid"></i>
                <button class="tool" aria-label="На передний план"><svg class="ico"><use href="#front"/></svg></button>
                <button class="tool" aria-label="На задний план"><svg class="ico"><use href="#back"/></svg></button>
            </div>

            <aside class="screenmenu">
                <i class="hgrip"></i>
                <a href="#">AutoCAD</a>
                <span class="stars">* * * *</span>
                <a class="spaced" href="#">Подел:</a>
                <a class="spaced" href="#">Блок</a>
                <a href="#">Да</a>
                <a class="fill-row" href="#">Нет</a>
                <a href="#">СРЕДСТВА</a>
                <a href="#">ПРЕДМЕНЮ</a>
            </aside>
        </main>

        <div class="command">
            <i class="grip"></i>
            <div class="cmdbox">
                <div class="cmdrow history">
                    <output>Команда: _divide</output>
                    <span class="spin"><button aria-label="История вверх"></button><button aria-label="История вниз"></button></span>
                </div>
                <div class="cmdrow">
                    <label for="cmd">Выберите объект для деления:</label>
                    <input id="cmd" type="text">
                    <button class="arrow" aria-label="Команда влево">◂</button>
                    <i class="cmdthumb"></i>
                    <button class="arrow" aria-label="Команда вправо">▸</button>
                    <i class="cmdend"></i>
                </div>
            </div>
        </div>

        <footer class="status">
            <span class="coords">124.2742, &nbsp;271.6494, 0.0000</span>
            <button>ШАГ</button>
            <button>СЕТКА</button>
            <button>ОРТО</button>
            <button class="on">ОТС-ПОЛЯР</button>
            <button class="on">ПРИВЯЗКА</button>
            <button class="on">ОТС-ОБЪЕКТ</button>
            <button class="on">ДИН</button>
            <button>ВЕС</button>
            <button class="on">МОДЕЛЬ</button>
            <span class="notify">
                <svg class="ico"><use href="#tip"/></svg>
                <svg class="ico"><use href="#goldlock"/></svg>
                <svg class="ico" viewBox="0 0 12 12"><path d="M3 5h6l-3 4z"/></svg>
                <svg class="ico" viewBox="0 0 12 12"><path d="M3 12l9-9M7 12l5-5" stroke="#5c9088"/></svg>
            </span>
        </footer>
    </div>

    <div class="taskbar">
        <button class="start"><svg class="ico"><use href="#flag"/></svg>Пуск</button>
        <div class="quick">
            <a href="#" aria-label="Internet Explorer"><svg class="ico"><use href="#ie"/></svg></a>
            <a href="#" aria-label="Рабочий стол"><svg class="ico"><use href="#pencil"/></svg></a>
            <a href="#" aria-label="Программа"><svg class="ico"><use href="#blueapp"/></svg></a>
            <a href="#" aria-label="Почтовик"><svg class="ico"><use href="#bird"/></svg></a>
            <a href="#" aria-label="Загрузки"><svg class="ico"><use href="#redapp"/></svg></a>
            <a href="#" aria-label="Почта"><svg class="ico"><use href="#mail"/></svg></a>
            <a href="#" aria-label="Firefox"><svg class="ico"><use href="#firefox"/></svg></a>
            <b>»</b>
        </div>
        <button class="task"><svg class="ico"><use href="#firefox"/></svg><span>Автокад - Mozilla Fir...</span></button>
        <button class="task"><svg class="ico"><use href="#folder"/></svg><span><b>2</b> Проводник</span><i>▾</i></button>
        <button class="task"><svg class="ico"><use href="#acdsee"/></svg><span>отрезок.jpg - ACDS...</span></button>
        <button class="task active"><svg class="ico"><use href="#acad"/></svg><span>AutoCAD 2006</span></button>
        <div class="tray">
            <span class="lang">EN</span>
            <b>«</b>
            <span class="load">17%</span>
            <span class="load">34%</span>
            <svg class="ico"><use href="#net"/></svg>
            <svg class="ico"><use href="#query"/></svg>
            <svg class="ico"><use href="#updown"/></svg>
            <svg class="ico"><use href="#meter"/></svg>
            <time>22:11</time>
        </div>
    </div>
</body>
</html>
```
FILE: styles.css
```css
* {
    box-sizing: border-box;
}

body {
    margin: 0;
    min-height: 100vh;
    display: flex;
    flex-direction: column;
    background: linear-gradient(to right, #3f82e6 0, #3f82e6 98%, #17399a 99%);
    font-family: Roboto, "Liberation Sans", sans-serif;
    font-size: 7px;
    line-height: 10px;
    color: #0c1c1c;
}

a {
    color: inherit;
    text-decoration: none;
}

button {
    font: inherit;
    color: inherit;
    padding: 0;
    border: 0;
    background: none;
}

.sprite {
    display: none;
}

.ico {
    width: 11px;
    height: 11px;
    flex: none;
    display: block;
}

.app {
    flex: 1;
    display: flex;
    flex-direction: column;
    margin: 2px 3px 0 2px;
    padding: 2px 1px 0 2px;
    background: #87bdb3;
    border-top: 1px solid #c8e4dc;
}

/* заголовки окон */
.titlebar {
    display: flex;
    align-items: center;
    height: 11px;
    padding: 0 2px 0 1px;
    gap: 1px;
    background: linear-gradient(to right, #0a1478, #0c2c8c 30%, #1068a8 62%, #1cb4c4 92%);
    color: #fff;
}

.titlebar h1,
.titlebar h2 {
    flex: 1;
    margin: 0;
    font-size: 8px;
    font-weight: bold;
    line-height: 10px;
}

.winbtn {
    width: 10px;
    height: 9px;
    background: #8fc3b9;
    border: 1px solid;
    border-color: #d4ece4 #1c4440 #1c4440 #d4ece4;
}

.winbtn svg {
    display: block;
    width: 8px;
    height: 7px;
}

.menu {
    display: flex;
    gap: 7px;
    height: 13px;
    padding: 1px 4px;
}

/* панели инструментов */
.toolbar {
    display: flex;
    align-items: center;
    height: 17px;
    padding-left: 2px;
    border-top: 1px solid #b4dad0;
    border-bottom: 1px solid #5f968e;
}

.tool {
    width: 14px;
    height: 14px;
    flex: none;
    display: flex;
    align-items: center;
    justify-content: center;
}

.tool.narrow {
    width: 8px;
}

.tool.narrow .ico {
    width: 8px;
}

.grip {
    width: 4px;
    height: 13px;
    margin: 0 1px;
    flex: none;
    border: 1px solid;
    border-color: #c4e2da #5f968e #5f968e #c4e2da;
}

.grip.wide {
    margin: 0 4px;
}

.sep {
    width: 1px;
    height: 12px;
    margin: 0 2px;
    flex: none;
    background: #6ea59c;
    box-shadow: 1px 0 #a8d2c8;
}

.combo {
    display: flex;
    align-items: center;
    height: 13px;
    margin: 0 2px;
    padding-left: 1px;
    border: 1px solid #9accc2;
    border-top: 1px solid #1c4c48;
    border-left: 2px solid #1c4c48;
}

.combo .ico {
    width: 10px;
}

.combo select {
    flex: 1;
    width: 0;
    height: 11px;
    padding: 0 2px;
    border: 0;
    appearance: none;
    background: none;
    font: inherit;
    line-height: 10px;
    color: #4c827a;
}

.combo b {
    width: 8px;
    height: 11px;
    flex: none;
    border: 1px solid;
    border-color: #b8dcd4 #24524c #24524c #b8dcd4;
}

.combo b::after {
    content: "";
    display: block;
    margin: 4px 1px 0;
    border: 2px solid transparent;
    border-top-color: #5f968e;
}

.combo .rule {
    width: 38px;
    height: 1px;
    margin: 0 1px;
    flex: none;
    background: #1c3c3c;
}

.combo.style { width: 61px; }
.combo.last { flex: 1; margin-right: 0; }
.combo.layer { width: 185px; margin: 0 1px; }
.combo.color { width: 93px; }
.combo.ltype { width: 100px; }
.combo.weight { width: 78px; }
.combo.weight .rule { width: 22px; }
.combo.plot { width: 75px; }

.sep.end {
    height: 15px;
}

/* рабочая область */
.work {
    flex: 1;
    display: flex;
    align-items: flex-start;
    min-height: 0;
}

.palette {
    width: 15px;
    margin: 1px 1px 0 0;
    display: flex;
    flex-direction: column;
    align-items: center;
    padding-bottom: 1px;
    border-right: 1px solid #6ea59c;
    border-bottom: 1px solid #6ea59c;
    box-shadow: inset 1px 0 #a0ccc2;
    height: 282px;
}

.palette .tool {
    flex: 1;
}

.hgrip {
    width: 12px;
    height: 4px;
    margin: 1px 0;
    flex: none;
    border-top: 1px solid #c4e2da;
    border-bottom: 1px solid #c4e2da;
    box-shadow: 0 1px #6ea59c;
}

.hgrip.mid {
    margin: 2px 0 4px;
}

.hsep {
    width: 12px;
    height: 1px;
    margin: 1px 0;
    flex: none;
    background: #5f968e;
}

.dims {
    height: 353px;
    margin-left: 3px;
}

.doc {
    flex: 1;
    align-self: stretch;
    display: flex;
    flex-direction: column;
    min-width: 0;
    margin: 1px 0 4px 2px;
    padding: 2px;
    border: 2px solid #17504c;
    border-top-color: #2c6460;
    box-shadow: inset 1px 1px #b0d8ce;
}

.view {
    flex: 1;
    display: flex;
}

.canvas {
    flex: 1;
    position: relative;
    background: #000;
}

.segment {
    position: absolute;
    left: 84px;
    top: 131px;
    width: 283px;
    height: 2px;
    background: repeating-linear-gradient(to right, #fff 0 2px, #777 2px 3px);
}

.pick {
    position: absolute;
    z-index: 3;
    left: 192px;
    top: 130px;
    width: 5px;
    height: 5px;
    border: 1px solid #ddd;
    background: #000;
}

.prompt {
    position: absolute;
    left: 204px;
    top: 143px;
    width: 106px;
    height: 12px;
    padding-left: 1px;
    white-space: nowrap;
    background: #26263c;
    border: 1px solid #62627e;
    color: #b4b4c4;
}

.ucs {
    position: absolute;
    left: 2px;
    bottom: 3px;
    width: 62px;
    height: 62px;
}

/* выноски с пояснениями */
.callout {
    position: absolute;
    z-index: 2;
}

.callout svg {
    display: block;
    width: 100%;
}

.callout p {
    position: absolute;
    top: 0;
    margin: 0;
    font: bold 12px/14px "Liberation Sans", sans-serif;
    text-align: center;
    white-space: nowrap;
    color: #0a0a14;
}

.callout .fill { fill: #fff; }
.callout .glow { fill: none; stroke: #2c269c; stroke-width: 8; }
.callout .edge { fill: none; stroke: #15108c; stroke-width: 1; }
.callout .halo { fill: none; stroke: #14124c; stroke-width: 2; }

.ask {
    left: 7px;
    top: 2px;
    width: 320px;
}

.ask p {
    left: 0;
    right: 8px;
    padding-top: 10px;
}

.split {
    left: -28px;
    top: 180px;
    width: 310px;
}

.split p {
    left: 48px;
    right: 0;
    padding-top: 16px;
}

/* полосы прокрутки */
.arrow {
    width: 9px;
    height: 9px;
    flex: none;
    font-size: 8px;
    line-height: 7px;
    overflow: hidden;
    background: #8fc3b9;
    border: 1px solid;
    border-color: #c8e4dc #24524c #24524c #c8e4dc;
}

.vscroll {
    width: 9px;
    display: flex;
    flex-direction: column;
    background: #aad3c9;
}

.vthumb {
    flex: none;
    height: 182px;
    margin-bottom: auto;
    border-right: 1px solid #24524c;
    border-bottom: 1px solid #24524c;
}

.tabs {
    display: flex;
    height: 10px;
}

.tabs > .arrow {
    width: 12px;
    height: 10px;
    border-color: #a8d2c8 #6ea59c #6ea59c #a8d2c8;
}

.tabs > .arrow svg {
    display: block;
    width: 6px;
    height: 6px;
    margin: 0 auto;
}

.tab {
    display: flex;
    padding-left: 4px;
    line-height: 10px;
    background: #97c9bf;
    border-bottom: 1px solid #17302c;
}

.tab::after {
    content: "";
    width: 1px;
    height: 10px;
    margin: 0 2px 0 4px;
    background: #17302c;
    transform: skewX(-20deg);
}

.tab.active {
    padding: 0 4px 0 5px;
    background: #000;
    color: #fff;
    clip-path: polygon(0 0, 100% 0, calc(100% - 3px) 100%, 4px 100%);
}

.tab.active::after {
    display: none;
}

.hscroll {
    flex: none;
    width: 33%;
    margin-left: auto;
    display: flex;
    background: #aad3c9;
    border-left: 2px solid #24524c;
}

.hthumb {
    width: 9px;
    margin-left: auto;
    margin-right: 52px;
    background: #8fc3b9;
    border: 1px solid;
    border-color: #c8e4dc #24524c #24524c #c8e4dc;
}

.corner {
    width: 9px;
}

/* экранное меню */
.screenmenu {
    width: 57px;
    height: 265px;
    margin-top: 1px;
    display: flex;
    flex-direction: column;
    border-bottom: 1px solid #6ea59c;
    border-right: 1px solid #6ea59c;
    line-height: 9px;
}

.screenmenu .hgrip {
    width: auto;
    margin-bottom: 2px;
}

.screenmenu a {
    padding-left: 1px;
    padding-bottom: 1px;
}

.screenmenu .stars {
    height: 9px;
    padding-left: 1px;
}

.screenmenu .spaced {
    padding-bottom: 10px;
}

.screenmenu .fill-row {
    flex: 1;
}

.screenmenu a:last-child {
    padding-bottom: 14px;
}

/* командная строка */
.command {
    display: flex;
    padding: 4px 4px 0 2px;
    height: 28px;
    border-top: 1px solid #24524c;
    box-shadow: inset 0 2px #a8d2c8;
}

.command .grip {
    height: 22px;
}

.cmdbox {
    flex: 1;
    margin-left: 1px;
    border-left: 1px solid #24524c;
    border-top: 1px solid #24524c;
    background: #c6e1d7;
    font-family: "Liberation Mono", monospace;
    font-size: 8px;
}

.cmdrow {
    display: flex;
    align-items: center;
    height: 11px;
    padding-left: 1px;
}

.cmdrow.history {
    border-bottom: 1px solid #8fc3b9;
}

.cmdrow output {
    flex: 1;
}

.cmdrow input {
    flex: 1;
    width: 0;
    height: 10px;
    padding: 0;
    border: 0;
    background: none;
    font: inherit;
}

.spin {
    width: 8px;
    display: flex;
    flex-direction: column;
}

.spin button {
    height: 5px;
    background: #8fc3b9;
    border: 1px solid;
    border-color: #d4ece4 #24524c #24524c #d4ece4;
}

.cmdthumb {
    width: 8px;
    height: 9px;
    margin-right: 7px;
    background: #8fc3b9;
    border-right: 1px solid #24524c;
    border-bottom: 1px solid #24524c;
}

.cmdend {
    width: 8px;
    height: 10px;
    background: #87bdb3;
}

/* строка состояния */
.status {
    display: flex;
    align-items: center;
    gap: 1px;
    height: 15px;
    padding: 1px 0 1px 2px;
}

.status .coords {
    width: 149px;
    padding-left: 2px;
    line-height: 11px;
    border: 1px solid;
    border-color: #5f968e #b8dcd4 #b8dcd4 #5f968e;
}

.status button {
    height: 12px;
    padding: 0 1px;
    border: 1px solid;
    border-color: #a8d2c8 #6ea59c #6ea59c #a8d2c8;
}

.status .on {
    padding: 0 2px;
    border-color: #24524c #c8e4dc #c8e4dc #24524c;
}

.notify {
    display: flex;
    gap: 2px;
    margin-left: auto;
}

/* панель задач */
.taskbar {
    display: flex;
    align-items: center;
    gap: 3px;
    height: 18px;
    padding: 1px 2px 0 3px;
    background: #87bdb3;
    border-top: 1px solid #b8dcd4;
}

.taskbar button {
    display: flex;
    align-items: center;
    gap: 2px;
    height: 15px;
    padding: 0 2px;
    border: 1px solid;
    border-color: #c8e4dc #24524c #24524c #c8e4dc;
}

.taskbar .start {
    font-size: 8px;
    font-weight: bold;
    padding: 0;
    gap: 1px;
}

.quick {
    display: flex;
    align-items: center;
    gap: 3px;
    width: 127px;
    padding-left: 6px;
    border-left: 1px solid #6ea59c;
}

.quick b {
    margin-left: auto;
    margin-right: 5px;
    font-size: 8px;
}

.task {
    flex: none;
    width: 84px;
    white-space: nowrap;
}

.task span {
    flex: 1;
    text-align: left;
}

.task i {
    font-style: normal;
}

.taskbar .active {
    background: #a8d2c8;
    border-color: #24524c #c8e4dc #c8e4dc #24524c;
    font-size: 8px;
    font-weight: bold;
}

.tray {
    flex: 1;
    display: flex;
    align-items: center;
    justify-content: flex-end;
    gap: 3px;
    padding-right: 4px;
}

.lang {
    padding: 0 1px;
    margin-right: 2px;
    background: #10208c;
    color: #fff;
}

.load {
    font-size: 5px;
    line-height: 6px;
    border-bottom: 1px solid #0c1c1c;
}
```
